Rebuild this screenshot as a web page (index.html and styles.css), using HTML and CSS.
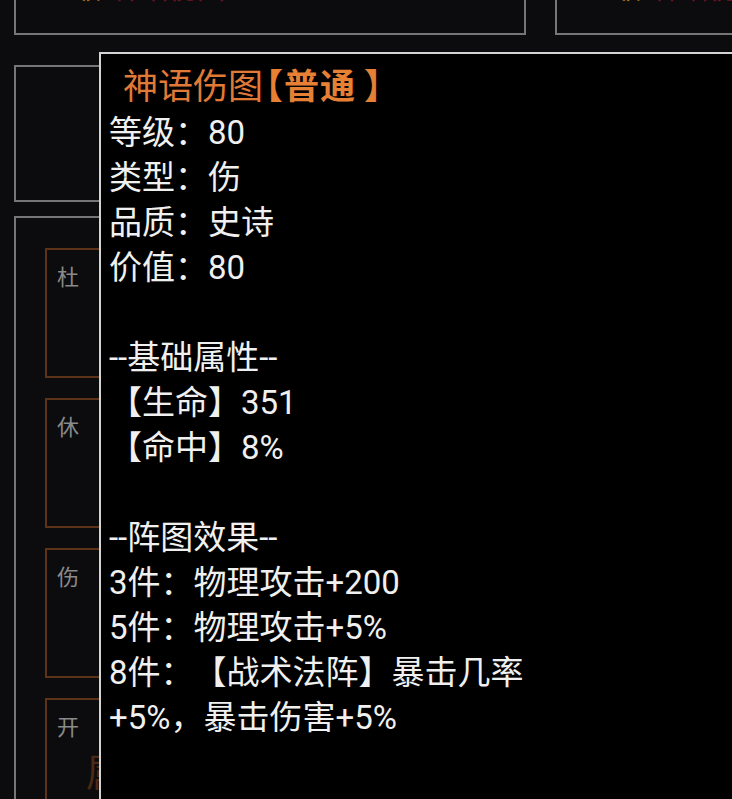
FILE: index.html
```html
<!DOCTYPE html>
<html lang="zh-CN">
<head>
<meta charset="utf-8">
<title>阵图</title>
<link rel="stylesheet" href="styles.css">
</head>
<body>
<div class="page">
  <div class="top-row">
    <div class="panel panel-a">
      <span class="tag">80级</span><span class="name">神语伤图</span>
    </div>
    <div class="panel panel-b">
      <span class="tag">80级</span><span class="name">神语伤图</span>
    </div>
  </div>

  <div class="panel info-panel"></div>

  <div class="panel grid-panel">
    <div class="gate-grid">
      <div class="gate"><span class="gate-label">杜</span></div>
      <div class="gate"><span class="gate-label">景</span></div>
      <div class="gate"><span class="gate-label">死</span></div>
      <div class="gate"><span class="gate-label">休</span></div>
      <div class="gate"><span class="gate-label">中</span></div>
      <div class="gate"><span class="gate-label">惊</span></div>
      <div class="gate"><span class="gate-label">伤</span></div>
      <div class="gate"><span class="gate-label">生</span></div>
      <div class="gate"><span class="gate-label">惊</span></div>
      <div class="gate"><span class="gate-label">开</span><span class="gate-item">属性</span></div>
      <div class="gate"><span class="gate-label">生</span></div>
      <div class="gate"><span class="gate-label">景</span></div>
    </div>
  </div>

  <div class="tooltip">
    <div class="tip-title">神语伤图<span class="tip-grade">【普通<span class="tip-close">】</span></span></div>
    <div class="tip-line">等级：80</div>
    <div class="tip-line">类型：伤</div>
    <div class="tip-line">品质：史诗</div>
    <div class="tip-line">价值：80</div>
    <div class="tip-line tip-gap"></div>
    <div class="tip-line">--基础属性--</div>
    <div class="tip-line">【生命】351</div>
    <div class="tip-line">【命中】8%</div>
    <div class="tip-line tip-gap"></div>
    <div class="tip-line">--阵图效果--</div>
    <div class="tip-line">3件：物理攻击+200</div>
    <div class="tip-line">5件：物理攻击+5%</div>
    <div class="tip-line">8件：【战术法阵】暴击几率</div>
    <div class="tip-line">+5%，暴击伤害+5%</div>
  </div>
</div>
</body>
</html>
```

FILE: styles.css
```css
html, body {
  margin: 0;
  padding: 0;
  background: #0c0c0f;
  height: 100%;
  overflow: hidden;
}

body {
  font-family: Roboto, "Noto Sans CJK SC", sans-serif;
  color: #eeeeee;
}

.page {
  position: relative;
  display: flow-root;
  padding: 0 14px;
  min-height: 100%;
}

.panel {
  box-sizing: border-box;
  border: 2px solid #767676;
  background: #0c0c0f;
}

/* equipped rows at the top, scrolled mostly out of view */
.top-row {
  display: flex;
  gap: 29px;
  margin-top: -62px;
  margin-right: -60px;
}

.panel-a,
.panel-b {
  height: 97px;
  padding: 29px 0 0 26px;
  font-family: "Noto Sans CJK SC", sans-serif;
  font-size: 28px;
  line-height: 36px;
  white-space: nowrap;
  overflow: hidden;
}

.panel-a {
  width: 512px;
  flex: none;
}

.panel-b {
  flex: 1;
  padding-left: 25px;
}

.tag {
  color: #a8741f;
  margin-right: 12px;
}

.name {
  color: #741426;
}

.info-panel {
  margin-top: 30px;
  height: 137px;
}

.grid-panel {
  margin-top: 14px;
  padding: 30px 29px;
  height: 800px;
}

.gate-grid {
  display: grid;
  grid-template-columns: repeat(3, 1fr);
  gap: 20px;
}

.gate {
  box-sizing: border-box;
  height: 130px;
  border: 2px solid #5e3419;
  padding: 10px 10px;
  display: flex;
  flex-direction: column;
  align-items: flex-start;
  font-family: "Noto Sans CJK SC", sans-serif;
}

.gate-label {
  font-size: 22px;
  line-height: 30px;
  color: #8a8a8a;
}

.gate-item {
  margin-top: 7px;
  padding-left: 29px;
  font-size: 38px;
  line-height: 46px;
  color: #4a2a14;
}

/* item detail popup */
.tooltip {
  position: absolute;
  left: 99px;
  top: 52px;
  right: -40px;
  bottom: -40px;
  background: #000;
  border: 2px solid #d4d4d4;
  padding: 11px 8px 0 8px;
  text-spacing-trim: space-all;
}

.tip-title {
  font-size: 35px;
  line-height: 45px;
  color: #e07a36;
  padding-left: 14px;
  white-space: nowrap;
}

.tip-grade {
  font-weight: 700;
  color: #e58035;
  margin-left: -15px;
  letter-spacing: 1px;
}

.tip-close {
  margin-left: 8px;
}

.tip-line {
  font-size: 33px;
  line-height: 45px;
  height: 45px;
  color: #f0f0f0;
  white-space: nowrap;
}
```
